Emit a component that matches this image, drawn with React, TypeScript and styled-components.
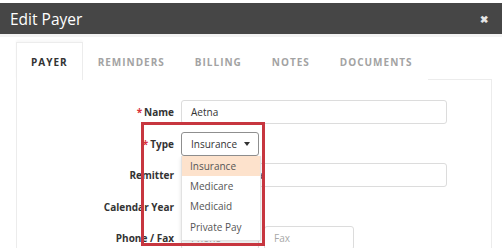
import styled, {createGlobalStyle} from "styled-components";

const GlobalStyle = createGlobalStyle`
    body {
        margin: 0;
        background: #ffffff;
        font-family: "Open Sans", "Liberation Sans", sans-serif;
    }
`

const StyledPage = styled.div`
    width: 502px;
    height: 248px;
    overflow: hidden;
    padding-top: 3px;
    box-sizing: border-box;
    background: #ffffff;
`

const StyledHeader = styled.div`
    height: 31px;
    background: #464646;
    display: flex;
    align-items: center;
    justify-content: space-between;
    padding: 0 14px 0 10px;
    border-bottom: 3px solid #f3f3f3;
`

const StyledTitle = styled.h1`
    margin: 0;
    font: 400 15.5px "Open Sans", sans-serif;
    color: #ffffff;
`

const StyledClose = styled.span`
    color: #e6e6e6;
    font: 700 10px "Open Sans", sans-serif;
    line-height: 1;
`

/*Tabs and the pane under them*/
const StyledBody = styled.div`
    padding: 5px 10px 0 16px;
`

const StyledTabs = styled.div`
    display: flex;
    border-bottom: 1px solid #ececec;
    height: 37px;
`

const StyledTab = styled.div<{ $active?: boolean }>`
    padding: 0 14px 0 14px;
    display: flex;
    align-items: center;
    font: 700 10px "Open Sans", sans-serif;
    letter-spacing: 1px;
    color: ${p => p.$active ? "#333333" : "#a3a3a3"};
    background: #ffffff;
    border: 1px solid ${p => p.$active ? "#ececec" : "transparent"};
    border-bottom: none;
    margin-bottom: -1px;
    box-shadow: ${p => p.$active ? "0 -2px 2px rgba(0,0,0,0.03)" : "none"};
`

const StyledPane = styled.div`
    position: relative;
    border-left: 1px solid #ececec;
    border-right: 1px solid #ececec;
    height: 200px;
    padding-top: 20px;
    box-sizing: border-box;
`

const StyledForm = styled.div`
    display: grid;
    grid-template-columns: 157px 266px;
    grid-auto-rows: 24px;
    column-gap: 7px;
    row-gap: 7.5px;
`

const StyledLabel = styled.label`
    display: flex;
    align-items: center;
    justify-content: flex-end;
    font: 700 10px "Open Sans", sans-serif;
    color: #333333;
`

const StyledStar = styled.span`
    color: #d9333f;
    margin-right: 2px;
`

const StyledInput = styled.div<{ $width?: number; $placeholder?: boolean }>`
    box-sizing: border-box;
    width: ${p => p.$width ? p.$width + "px" : "100%"};
    height: 24px;
    border: 1px solid #dcdcdc;
    border-radius: 3px;
    padding: 0 9px;
    display: flex;
    align-items: center;
    font: 400 10px "Open Sans", sans-serif;
    color: ${p => p.$placeholder ? "#a8a8a8" : "#333333"};
    background: #ffffff;
    white-space: nowrap;
    overflow: hidden;
`

const StyledPair = styled.div`
    display: flex;
    gap: 5px;
`

const StyledSelectWrap = styled.div`
    position: relative;
    width: 78px;
`

const StyledSelect = styled.div`
    box-sizing: border-box;
    height: 24px;
    border: 1px solid #8f8f8f;
    border-radius: 3px;
    padding: 0 8px 0 9px;
    display: flex;
    align-items: center;
    justify-content: space-between;
    font: 400 10px "Open Sans", sans-serif;
    color: #333333;
`

const StyledCaret = styled.span`
    width: 0;
    height: 0;
    border-left: 3.5px solid transparent;
    border-right: 3.5px solid transparent;
    border-top: 4px solid #333333;
`

/*Open list under the select*/
const StyledMenu = styled.ul`
    position: absolute;
    top: 24px;
    left: 0;
    width: 78px;
    margin: 0;
    padding: 0 0 3px;
    list-style: none;
    background: #ffffff;
    border: 1px solid #e2e2e2;
    border-top: none;
    box-shadow: 0 2px 4px rgba(0,0,0,0.12);
    z-index: 2;
`

const StyledOption = styled.li<{ $active?: boolean }>`
    height: 20.3px;
    display: flex;
    align-items: center;
    padding-left: 8px;
    font: 400 10px "Open Sans", sans-serif;
    color: #555555;
    background: ${p => p.$active ? "#fde2cc" : "#ffffff"};
`

/*Red annotation box drawn over the form*/
const StyledHighlight = styled.div`
    position: absolute;
    left: 124px;
    top: 42px;
    width: 124px;
    height: 124px;
    border: 3px solid #c7363f;
    box-sizing: border-box;
    z-index: 3;
    pointer-events: none;
`

export default function App() {
    const tabs = ["PAYER", "REMINDERS", "BILLING", "NOTES", "DOCUMENTS"];
    const options = ["Insurance", "Medicare", "Medicaid", "Private Pay"];

    return (
        <StyledPage>
            <GlobalStyle/>
            <StyledHeader>
                <StyledTitle>Edit Payer</StyledTitle>
                <StyledClose>✖</StyledClose>
            </StyledHeader>
            <StyledBody>
                <StyledTabs>
                    {tabs.map((t, i) => <StyledTab key={t} $active={i === 0}>{t}</StyledTab>)}
                </StyledTabs>
                <StyledPane>
                    <StyledForm>
                        <StyledLabel><StyledStar>*</StyledStar>Name</StyledLabel>
                        <StyledInput>Aetna</StyledInput>

                        <StyledLabel><StyledStar>*</StyledStar>Type</StyledLabel>
                        <StyledSelectWrap>
                            <StyledSelect>Insurance<StyledCaret/></StyledSelect>
                            <StyledMenu>
                                {options.map((o, i) => <StyledOption key={o} $active={i === 0}>{o}</StyledOption>)}
                            </StyledMenu>
                        </StyledSelectWrap>

                        <StyledLabel>Remitter</StyledLabel>
                        <StyledInput>Remit to: Aetna</StyledInput>

                        <StyledLabel>Calendar Year</StyledLabel>
                        <StyledInput $width={78} $placeholder>Year</StyledInput>

                        <StyledLabel>Phone / Fax</StyledLabel>
                        <StyledPair>
                            <StyledInput $width={78} $placeholder>Phone</StyledInput>
                            <StyledInput $width={90} $placeholder>Fax</StyledInput>
                        </StyledPair>
                    </StyledForm>
                    <StyledHighlight/>
                </StyledPane>
            </StyledBody>
        </StyledPage>
    );
}
